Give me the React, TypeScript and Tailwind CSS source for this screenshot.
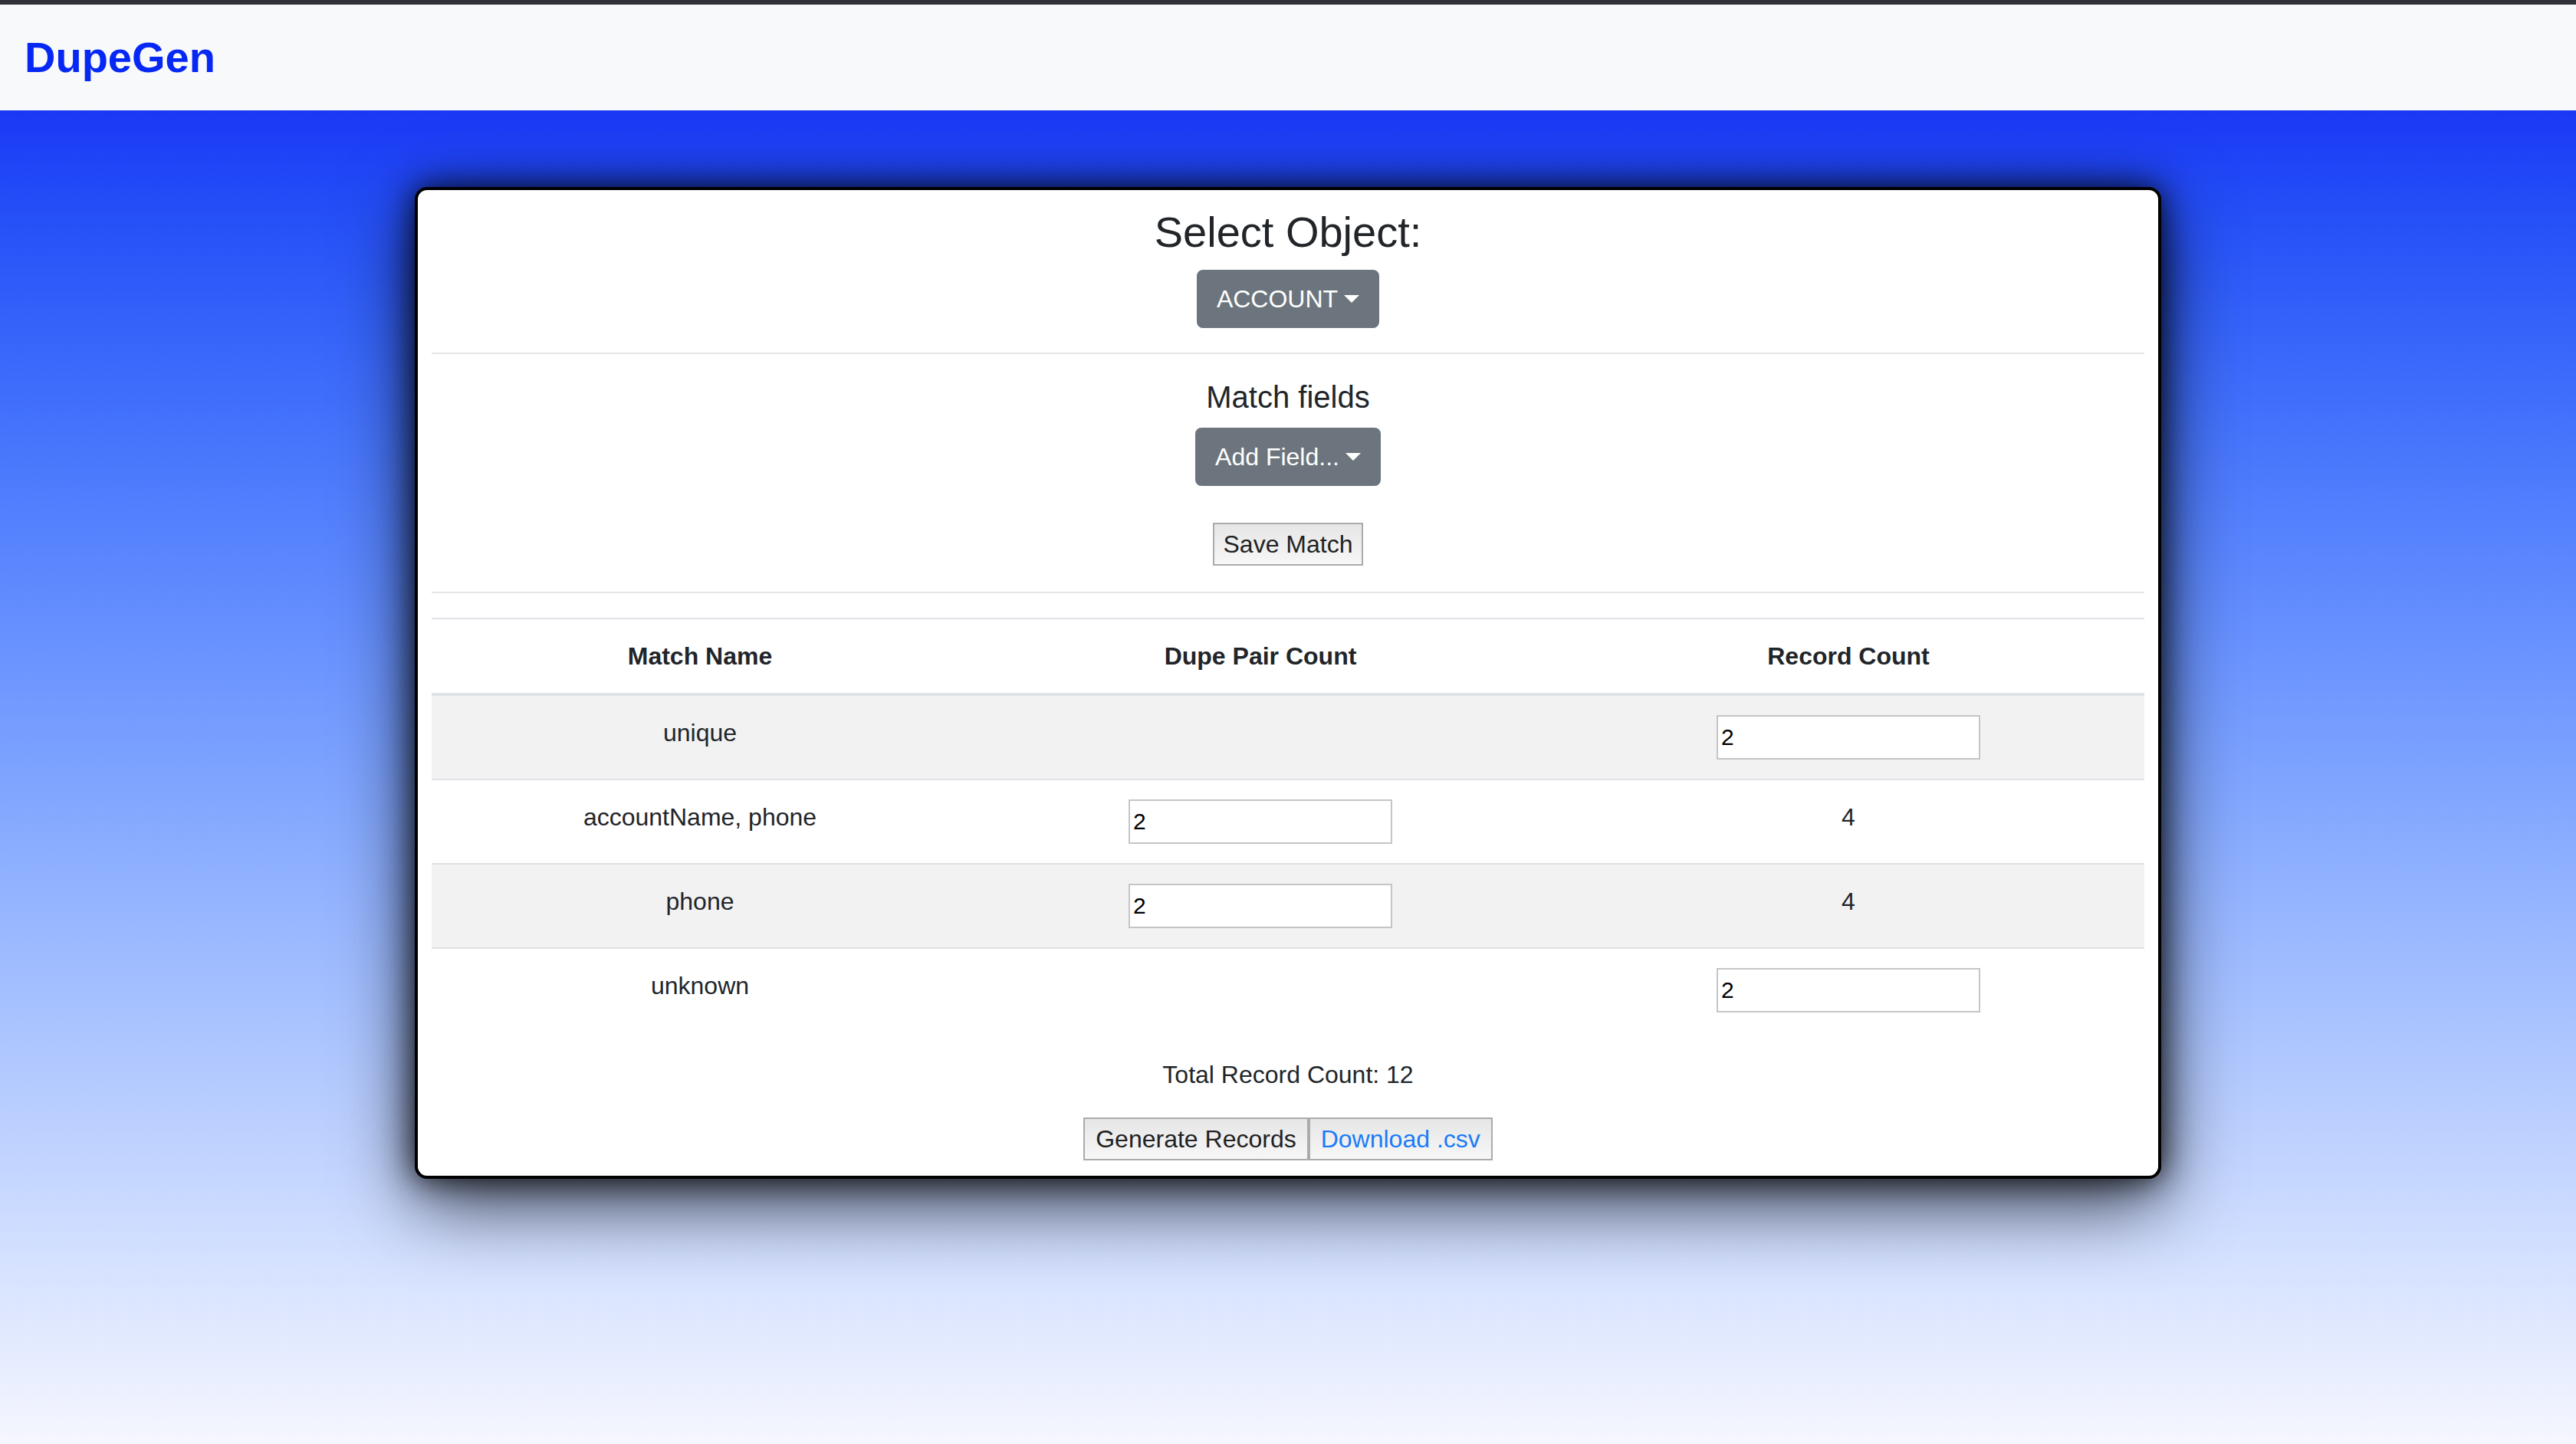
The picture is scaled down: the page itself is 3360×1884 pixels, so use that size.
import React from "react";

interface MatchRow {
  name: string;
  dupe: string | null; // null -> show input
  record: string | null; // null -> show input
}

const rows: MatchRow[] = [
  { name: "unique", dupe: "", record: null },
  { name: "accountName, phone", dupe: null, record: "4" },
  { name: "phone", dupe: null, record: "4" },
  { name: "unknown", dupe: "", record: null },
];

function Caret() {
  return (
    <span className="ml-[8px] inline-block h-0 w-0 border-x-[10px] border-t-[10px] border-x-transparent border-t-white" />
  );
}

function DropButton({ label }: { label: string }) {
  return (
    <button className="inline-flex items-center rounded-[8px] border-2 border-[#6c757d] bg-[#6c757d] px-[24px] py-[12px] text-[32px] leading-[48px] text-white">
      {label}
      <Caret />
    </button>
  );
}

function CountInput() {
  return (
    <input
      type="text"
      defaultValue="2"
      className="mx-auto mt-[1px] block h-[58px] w-[344px] border-2 border-[#c5c5c5] bg-white px-[4px] text-left text-[30px] text-black outline-none"
    />
  );
}

export default function App() {
  return (
    <div className="flex min-h-screen flex-col font-['Liberation_Sans',Arial,sans-serif] text-[#212529]">
      {/* navbar */}
      <nav className="flex h-[144px] items-center border-t-[6px] border-[#2f3236] bg-[#f8f9fa] px-[32px]">
        <span className="text-[56px] font-bold leading-none text-[#0628f4]">DupeGen</span>
      </nav>

      <main className="flex-1 bg-linear-to-b from-[#1a38f5] to-[#f6f7fe] pb-[200px] pt-[100px]">
        <div className="mx-auto w-[2278px] rounded-[16px] border-4 border-black bg-white px-[18px] pb-[20px] pt-[21px] shadow-[0_0_40px_rgba(0,0,0,0.85),0_30px_100px_rgba(0,0,0,0.75)]">
          {/* object select */}
          <div className="text-center">
            <h3 className="mb-[16px] text-[56px] leading-[1.2]">Select Object:</h3>
            <DropButton label="ACCOUNT" />
          </div>

          <div className="my-[32px] h-[2px] bg-[#e6e6e6]" />

          {/* match fields */}
          <div className="text-center">
            <h5 className="mb-[16px] text-[40px] leading-[48px]">Match fields</h5>
            <DropButton label="Add Field..." />
            <div className="mt-[48px]">
              <button className="border-2 border-[#ababab] bg-linear-to-b from-[#e6e6e6] to-[#f7f7f7] px-[12px] py-[2px] text-[32px] leading-[48px] text-[#222]">
                Save Match
              </button>
            </div>
          </div>

          <div className="mb-[32px] mt-[34px] h-[2px] bg-[#e6e6e6]" />

          {/* matches table */}
          <table className="w-full">
            <thead>
              <tr>
                <th className="w-[700px] border-b-4 border-t-2 border-[#dee2e6] p-[24px] text-center align-top text-[32px] font-bold leading-[48px]">
                  Match Name
                </th>
                <th className="w-[762px] border-b-4 border-t-2 border-[#dee2e6] p-[24px] text-center align-top text-[32px] font-bold leading-[48px]">
                  Dupe Pair Count
                </th>
                <th className="border-b-4 border-t-2 border-[#dee2e6] p-[24px] text-center align-top text-[32px] font-bold leading-[48px]">
                  Record Count
                </th>
              </tr>
            </thead>
            <tbody>
              {rows.map((r, i) => (
                <tr key={r.name} className={i % 2 === 0 ? "bg-[#f2f2f2]" : "bg-white"}>
                  <td className="border-t-2 border-[#dee2e6] p-[24px] text-center align-top text-[32px] leading-[48px]">
                    <div className="h-[59px]">{r.name}</div>
                  </td>
                  <td className="border-t-2 border-[#dee2e6] p-[24px] text-center align-top text-[32px] leading-[48px]">
                    <div className="h-[59px]">{r.dupe === null ? <CountInput /> : r.dupe}</div>
                  </td>
                  <td className="border-t-2 border-[#dee2e6] p-[24px] text-center align-top text-[32px] leading-[48px]">
                    <div className="h-[59px]">{r.record === null ? <CountInput /> : r.record}</div>
                  </td>
                </tr>
              ))}
            </tbody>
          </table>

          <div className="mt-[32px] text-center text-[32px] leading-[48px]">Total Record Count: 12</div>

          <div className="mt-[32px] flex justify-center">
            <button className="border-2 border-[#ababab] bg-linear-to-b from-[#e6e6e6] to-[#f7f7f7] px-[14px] py-[2px] text-[32px] leading-[48px] text-[#222]">
              Generate Records
            </button>
            <button className="border-2 border-[#ababab] bg-linear-to-b from-[#e6e6e6] to-[#f7f7f7] px-[14px] py-[2px] text-[32px] leading-[48px] text-[#1a7cf6]">
              Download .csv
            </button>
          </div>
        </div>
      </main>
    </div>
  );
}
